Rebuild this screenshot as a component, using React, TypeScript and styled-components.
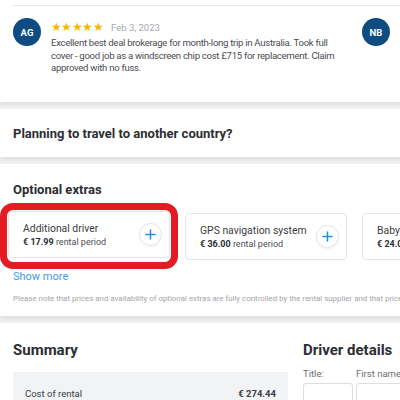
import { createGlobalStyle, styled } from "styled-components";

const GlobalStyle = createGlobalStyle`
  html, body {
    margin: 0;
    padding: 0;
    background: #f1f2f4;
    overflow: hidden;
  }
  body {
    font-family: Roboto, "Liberation Sans", sans-serif;
    color: #333;
  }
`;

const Page = styled.div`
  width: 460px;
  display: flex;
  flex-direction: column;
  gap: 7px;
`;

const Card = styled.section<{ $height: number }>`
  background: #fff;
  height: ${(p) => p.$height}px;
  box-shadow: 0 3px 4px rgba(0, 0, 0, 0.08);
  padding: 0 13px;
  box-sizing: border-box;
`;

const Divider = styled.div`
  height: 1px;
  background: #e6e7ea;
  margin-top: 5px;
`;

const Reviews = styled.div`
  display: flex;
  gap: 14px;
  margin-top: 12px;
`;

const Review = styled.div`
  width: 335px;
  flex: none;
  display: flex;
  gap: 9px;
`;

const Avatar = styled.div`
  width: 28px;
  height: 28px;
  border-radius: 50%;
  background: #0f4c81;
  color: #fff;
  font-weight: 700;
  font-size: 9.5px;
  display: flex;
  align-items: center;
  justify-content: center;
  flex: none;
`;

const ReviewBody = styled.div`
  display: flex;
  flex-direction: column;
  padding-top: 4px;
  padding-left: 1px;
`;

const Meta = styled.div`
  display: flex;
  align-items: center;
  gap: 8px;
  height: 11px;
`;

const Stars = styled.span`
  color: #f5b800;
  font-size: 11.5px;
  letter-spacing: -0.6px;
  line-height: 11px;
`;

const DateText = styled.span`
  color: #a7a9ad;
  font-size: 9.5px;
`;

const ReviewText = styled.p`
  margin: 4px 0 0;
  font-size: 9.6px;
  letter-spacing: -0.3px;
  line-height: 12.5px;
  color: #4a4d52;
  width: 290px;
`;

const SectionTitle = styled.h2<{ $top: number; $size?: number }>`
  margin: 0;
  padding-top: ${(p) => p.$top}px;
  font-size: ${(p) => p.$size ?? 13}px;
  font-weight: 700;
  color: #2b2e33;
  line-height: 16px;
`;

const ExtrasRow = styled.div`
  display: flex;
  gap: 15px;
  margin-top: 15px;
  margin-left: -4px;
`;

const Highlight = styled.div`
  border: 7.5px solid #e31b23;
  border-radius: 13px;
  padding: 1px;
  margin: -10px -8px -9px -9px;
  flex: none;
`;

const ExtraCard = styled.div`
  width: 162px;
  height: 47px;
  box-sizing: border-box;
  border: 1px solid #e4e5e8;
  border-radius: 4px;
  background: #fff;
  display: flex;
  align-items: center;
  justify-content: space-between;
  padding: 0 7px 0 14px;
  flex: none;
`;

const ExtraInfo = styled.div`
  display: flex;
  flex-direction: column;
  gap: 2px;
`;

const ExtraName = styled.span`
  font-size: 10.4px;
  color: #3a3d42;
`;

const ExtraPrice = styled.span`
  font-size: 9px;
  color: #4a4d52;
  b {
    font-weight: 700;
    color: #2b2e33;
  }
`;

const PlusButton = styled.div`
  width: 21px;
  height: 21px;
  border-radius: 50%;
  border: 1px solid #e1e3e6;
  box-shadow: 0 1px 2px rgba(0, 0, 0, 0.06);
  display: flex;
  align-items: center;
  justify-content: center;
  color: #1e8fe1;
`;

const ShowMore = styled.a`
  display: block;
  margin-top: 10px;
  font-size: 11px;
  color: #3f9ae8;
`;

const Note = styled.p`
  margin: 11px 0 0;
  font-size: 7.9px;
  color: #a3a5a9;
  white-space: nowrap;
`;

const Columns = styled.div`
  display: flex;
  gap: 15px;
`;

const SummaryCol = styled.div`
  width: 275px;
  flex: none;
`;

const SummaryBox = styled.div`
  margin-top: 14px;
  background: #f2f3f5;
  height: 40px;
  display: flex;
  justify-content: space-between;
  padding: 16px 12px 0;
  box-sizing: border-box;
  font-size: 9.5px;
  color: #3a3d42;
  b {
    font-weight: 700;
  }
`;

const DriverCol = styled.div`
  flex: none;
`;

const Fields = styled.div`
  display: flex;
  gap: 3px;
  margin-top: 10px;
`;

const Field = styled.div<{ $width: number }>`
  width: ${(p) => p.$width}px;
  display: flex;
  flex-direction: column;
  gap: 4px;
`;

const Label = styled.span`
  font-size: 9.5px;
  color: #6b6e73;
  line-height: 11px;
`;

const Input = styled.div`
  height: 22px;
  border: 1px solid #dcdee2;
  border-radius: 3px;
  display: flex;
  justify-content: flex-end;
  align-items: flex-end;
  padding: 0 6px 1px;
  color: #3f9ae8;
`;

function Plus() {
  return (
    <svg width="11" height="11" viewBox="0 0 12 12">
      <path d="M6 1v10M1 6h10" stroke="currentColor" strokeWidth="1.6" strokeLinecap="round" />
    </svg>
  );
}

function Chevron() {
  return (
    <svg width="9" height="6" viewBox="0 0 10 6">
      <path d="M1 1l4 4 4-4" fill="none" stroke="currentColor" strokeWidth="1.3" />
    </svg>
  );
}

type Extra = { name: string; price: string };

const extras: Extra[] = [
  { name: "Additional driver", price: "€ 17.99" },
  { name: "GPS navigation system", price: "€ 36.00" },
  { name: "Baby seat", price: "€ 24.01" },
];

function ExtraItem({ extra }: { extra: Extra }) {
  return (
    <ExtraCard>
      <ExtraInfo>
        <ExtraName>{extra.name}</ExtraName>
        <ExtraPrice>
          <b>{extra.price}</b> rental period
        </ExtraPrice>
      </ExtraInfo>
      <PlusButton>
        <Plus />
      </PlusButton>
    </ExtraCard>
  );
}

export default function App() {
  return (
    <>
      <GlobalStyle />
      <Page>
        <Card $height={102}>
          <Divider />
          <Reviews>
            <Review>
              <Avatar>AG</Avatar>
              <ReviewBody>
                <Meta>
                  <Stars>★★★★★</Stars>
                  <DateText>Feb 3, 2023</DateText>
                </Meta>
                <ReviewText>
                  Excellent best deal brokerage for month-long trip in Australia. Took full cover - good job as a
                  windscreen chip cost £715 for replacement. Claim approved with no fuss.
                </ReviewText>
              </ReviewBody>
            </Review>
            <Review>
              <Avatar>NB</Avatar>
              <ReviewBody>
                <Meta>
                  <Stars>★★★★★</Stars>
                  <DateText>Jan 28, 2023</DateText>
                </Meta>
                <ReviewText>
                  Great service and very helpful staff. Everything went smoothly from booking to drop-off.
                </ReviewText>
              </ReviewBody>
            </Review>
          </Reviews>
        </Card>
        <Card $height={48}>
          <SectionTitle $top={17}>Planning to travel to another country?</SectionTitle>
        </Card>
        <Card $height={152}>
          <SectionTitle $top={18}>Optional extras</SectionTitle>
          <ExtrasRow>
            <Highlight>
              <ExtraItem extra={extras[0]} />
            </Highlight>
            <ExtraItem extra={extras[1]} />
            <ExtraItem extra={extras[2]} />
          </ExtrasRow>
          <ShowMore>Show more</ShowMore>
          <Note>
            Please note that prices and availability of optional extras are fully controlled by the rental supplier and
            that prices are subject to change.
          </Note>
        </Card>
        <Card $height={120}>
          <Columns>
            <SummaryCol>
              <SectionTitle $top={19} $size={15}>Summary</SectionTitle>
              <SummaryBox>
                <span>Cost of rental</span>
                <b>€ 274.44</b>
              </SummaryBox>
            </SummaryCol>
            <DriverCol>
              <SectionTitle $top={19} $size={15}>Driver details</SectionTitle>
              <Fields>
                <Field $width={50}>
                  <Label>Title:</Label>
                  <Input>
                    <Chevron />
                  </Input>
                </Field>
                <Field $width={80}>
                  <Label>First name:</Label>
                  <Input />
                </Field>
              </Fields>
            </DriverCol>
          </Columns>
        </Card>
      </Page>
    </>
  );
}
